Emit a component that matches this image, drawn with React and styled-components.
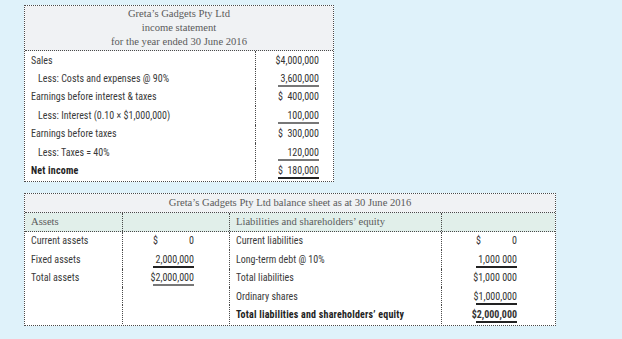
import React from 'react';
import styled, { createGlobalStyle } from 'styled-components';

const GlobalStyle = createGlobalStyle`
  html, body {
    margin: 0;
    padding: 0;
    background: #dff2fa;
  }
  body {
    font-family: "Liberation Sans Narrow", "Roboto Condensed", "Liberation Sans", Arial, sans-serif;
    color: #333;
  }
`;

const incomeRows = [
  { label: 'Sales', value: '$4,000,000' },
  { label: 'Less: Costs and expenses @ 90%', value: '3,600,000', indent: true, rule: 'grey' },
  { label: 'Earnings before interest & taxes', dollar: true, value: '400,000' },
  { label: 'Less: Interest (0.10 × $1,000,000)', value: '100,000', indent: true, rule: 'grey' },
  { label: 'Earnings before taxes', dollar: true, value: '300,000' },
  { label: 'Less: Taxes = 40%', value: '120,000', indent: true, rule: 'grey' },
  { label: 'Net income', dollar: true, value: '180,000', bold: true, rule: 'dark' },
];

const balanceRows = [
  {
    asset: 'Current assets', assetAmt: { dollar: true, value: '0' },
    liab: 'Current liabilities', liabAmt: { dollar: true, value: '0' },
  },
  {
    asset: 'Fixed assets', assetAmt: { value: '2,000,000', rule: 'dark' },
    liab: 'Long-term debt @ 10%', liabAmt: { value: '1,000 000', rule: 'dark' },
  },
  {
    asset: 'Total assets', assetAmt: { value: '$2,000,000', rule: 'grey' },
    liab: 'Total liabilities', liabAmt: { value: '$1,000 000' },
  },
  { liab: 'Ordinary shares', liabAmt: { value: '$1,000,000', rule: 'dark' } },
  {
    liab: 'Total liabilities and shareholders’ equity',
    liabAmt: { value: '$2,000,000', rule: 'dark' },
    bold: true,
  },
];

const Money = ({ dollar, value, rule, bold, width }) => (
  <Amount $rule={rule} $bold={bold} $width={width} $split={dollar}>
    {dollar && <span>$</span>}
    <span>{value}</span>
  </Amount>
);

const App = () => (
  <Page>
    <GlobalStyle />
    <Statement>
      <Heading>
        <HeadLine>Greta’s Gadgets Pty Ltd</HeadLine>
        <HeadLine>income statement</HeadLine>
        <HeadLine>for the year ended 30 June 2016</HeadLine>
      </Heading>
      <IncomeBody>
        {incomeRows.map((r) => (
          <IncomeRow key={r.label}>
            <Label $indent={r.indent} $bold={r.bold}>{r.label}</Label>
            <AmountCell $pad={14}>
              <Money dollar={r.dollar} value={r.value} rule={r.rule} width={41} />
            </AmountCell>
          </IncomeRow>
        ))}
      </IncomeBody>
    </Statement>

    <Sheet>
      <SheetTitle>Greta’s Gadgets Pty Ltd balance sheet as at 30 June 2016</SheetTitle>
      <SheetHead>
        <HeadCell>Assets</HeadCell>
        <HeadCell $divider />
        <HeadCell $divider>Liabilities and shareholders’ equity</HeadCell>
        <HeadCell $divider />
      </SheetHead>
      <SheetBody>
        {balanceRows.map((r, i) => (
          <SheetRow key={i}>
            <Label>{r.asset}</Label>
            <AmountCell $divider $pad={35}>
              {r.assetAmt && <Money {...r.assetAmt} width={41} />}
            </AmountCell>
            <Label $divider $bold={r.bold}>{r.liab}</Label>
            <AmountCell $divider $pad={38}>
              <Money {...r.liabAmt} bold={r.bold} width={41} />
            </AmountCell>
          </SheetRow>
        ))}
      </SheetBody>
    </Sheet>
  </Page>
);

const dots = '1px dotted #4a4a4a';
const serif = '"Liberation Serif", "DejaVu Serif", serif';

const Page = styled.div`
  padding: 5px 0 0 24px;
  min-height: 339px;
  box-sizing: border-box;
`;

const Statement = styled.section`
  width: 310px;
  box-sizing: border-box;
  border: ${dots};
  background: #fff;
`;

const Heading = styled.header`
  background: #f0f2f4;
  border-bottom: ${dots};
  padding: 1px 0 1px;
  text-align: center;
`;

const HeadLine = styled.div`
  font-family: ${serif};
  font-size: 10.6px;
  line-height: 14px;
  color: #5a5a5a;
`;

const IncomeBody = styled.div`
  padding: 0 0 1px;
`;

const IncomeRow = styled.div`
  display: grid;
  grid-template-columns: 230px 1fr;
  height: 18.4px;
`;

const Label = styled.div`
  display: flex;
  align-items: center;
  padding-left: ${(p) => (p.$indent ? 13 : 6)}px;
  font-size: 10px;
  font-weight: ${(p) => (p.$bold ? 700 : 400)};
  letter-spacing: ${(p) => (p.$bold ? '0.2px' : '0')};
  color: ${(p) => (p.$bold ? '#222' : '#3a3a3a')};
  white-space: nowrap;
  border-left: ${(p) => (p.$divider ? dots : 'none')};
`;

const AmountCell = styled.div`
  display: flex;
  align-items: center;
  justify-content: flex-end;
  padding-right: ${(p) => p.$pad}px;
  border-left: ${(p) => (p.$divider === false ? 'none' : dots)};
`;

const Amount = styled.span`
  display: inline-flex;
  justify-content: ${(p) => (p.$split ? 'space-between' : 'flex-end')};
  width: ${(p) => p.$width}px;
  white-space: nowrap;
  font-size: 10px;
  line-height: 11px;
  font-weight: ${(p) => (p.$bold ? 700 : 400)};
  color: #333;
  padding-bottom: 1px;
  border-bottom: 2px solid
    ${(p) => (p.$rule === 'dark' ? '#222' : p.$rule === 'grey' ? '#777' : 'transparent')};
  margin-bottom: -3px;
`;

const Sheet = styled.section`
  width: 532px;
  margin-top: 11px;
  box-sizing: border-box;
  border: ${dots};
  background: #fff;
`;

const SheetTitle = styled.div`
  height: 18px;
  line-height: 18px;
  text-align: center;
  background: #f0f2f4;
  border-bottom: ${dots};
  font-family: ${serif};
  font-size: 10.6px;
  color: #5a5a5a;
`;

const columns = '97px 107px 212px 1fr';

const SheetHead = styled.div`
  display: grid;
  grid-template-columns: ${columns};
  height: 18px;
  background: #e1efea;
  border-bottom: ${dots};
`;

const HeadCell = styled.div`
  display: flex;
  align-items: center;
  padding-left: 6px;
  font-family: ${serif};
  font-size: 10.6px;
  color: #5a5a5a;
  border-left: ${(p) => (p.$divider ? dots : 'none')};
`;

const SheetBody = styled.div`
  padding: 0 0 1px;
`;

const SheetRow = styled.div`
  display: grid;
  grid-template-columns: ${columns};
  height: 18.4px;
`;

export default App;
